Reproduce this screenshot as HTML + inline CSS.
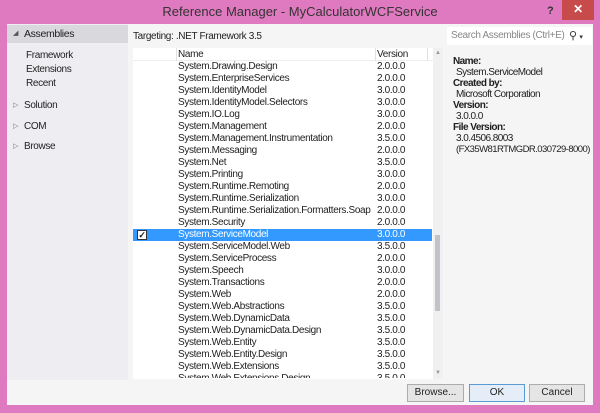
<!DOCTYPE html>
<html><head><meta charset="utf-8"><style>
*{margin:0;padding:0;box-sizing:border-box}
body{width:600px;height:413px;background:#e07ac0;font-family:"Liberation Sans",sans-serif;font-size:10px;letter-spacing:-0.35px;color:#1e1e1e;position:relative;overflow:hidden}
.abs{position:absolute}
.title{left:0;top:4px;width:600px;text-align:center;font-size:13px;letter-spacing:0;color:#333}
.client{left:7px;top:24px;width:586px;height:381px;background:#f5f5f5}
.left{left:7px;top:24px;width:121px;height:356px;background:#eeeef2}
.row{position:absolute;left:178px;height:12px;line-height:12px;width:260px;white-space:nowrap}
.ver{position:absolute;left:199px}
.btn{position:absolute;top:384px;height:18px;background:#e5e5e5;border:1px solid #acacac;text-align:center;line-height:16px;font-size:10px;letter-spacing:0}
.det{white-space:nowrap;letter-spacing:-0.55px}
.det b{font-weight:bold;display:block}
.det div{padding-left:3px}
</style></head><body>
<div class="abs title">Reference Manager - MyCalculatorWCFService</div>
<div class="abs" style="left:547px;top:5px;font-weight:bold;font-size:11px;color:#333">?</div>
<div class="abs" style="left:562px;top:0;width:32px;height:20px;background:#c74b4b;color:#fff;text-align:center;line-height:18px;font-size:12px;font-weight:bold">✕</div>
<div class="abs client"></div>
<div class="abs left"></div>
<div class="abs" style="left:7px;top:25px;width:121px;height:18px;background:#d8d8dd"></div>
<div class="abs" style="left:13px;top:29px;font-size:7px;color:#555">◢</div>
<div class="abs" style="left:24px;top:28px;font-size:10.5px">Assemblies</div>
<div class="abs" style="left:26px;top:50px">Framework</div>
<div class="abs" style="left:26px;top:64px">Extensions</div>
<div class="abs" style="left:26px;top:78px">Recent</div>
<div class="abs" style="left:13px;top:101px;font-size:7px;color:#777">▷</div>
<div class="abs" style="left:24px;top:100px">Solution</div>
<div class="abs" style="left:13px;top:122px;font-size:7px;color:#777">▷</div>
<div class="abs" style="left:24px;top:121px">COM</div>
<div class="abs" style="left:13px;top:142px;font-size:7px;color:#777">▷</div>
<div class="abs" style="left:24px;top:141px">Browse</div>
<div class="abs" style="left:133px;top:31px">Targeting: .NET Framework 3.5</div>
<div class="abs" style="left:447px;top:27px;width:145px;height:18px;background:#fff"></div>
<div class="abs" style="left:451px;top:30px;color:#888">Search Assemblies (Ctrl+E)</div>
<div class="abs" style="left:569px;top:29px;color:#333;font-size:11px">⚲ <span style="font-size:7px">▾</span></div>
<div class="abs" style="left:133px;top:48px;width:310px;height:331px;background:#fff"></div>
<div class="abs" style="left:133px;top:48px;width:300px;height:13px;border-bottom:1px solid #eee"></div>
<div class="abs" style="left:176px;top:48px;width:1px;height:13px;background:#e0e0e0"></div>
<div class="abs" style="left:375px;top:48px;width:1px;height:13px;background:#e0e0e0"></div>
<div class="abs" style="left:427px;top:48px;width:1px;height:13px;background:#e0e0e0"></div>
<div class="row" style="top:49px">Name<span class="ver">Version</span></div>
<div class="abs" style="left:433px;top:48px;width:10px;height:331px;background:#f0f0f0"></div>
<div class="abs" style="left:435px;top:50px;font-size:6px;color:#999">▲</div>
<div class="abs" style="left:435px;top:235px;width:5px;height:76px;background:#c2c3c9"></div>
<div class="abs" style="left:435px;top:370px;font-size:6px;color:#999">▼</div>
<div class="abs" style="left:133px;top:229px;width:299px;height:12px;background:#3399ff"></div>
<div class="abs" style="left:137px;top:230px;width:10px;height:10px;background:#fff;border:1px solid #333;font-size:9px;line-height:8px;text-align:center;font-weight:bold">✓</div>
<div class="row" style="top:61px">System.Drawing.Design<span class="ver">2.0.0.0</span></div>
<div class="row" style="top:73px">System.EnterpriseServices<span class="ver">2.0.0.0</span></div>
<div class="row" style="top:85px">System.IdentityModel<span class="ver">3.0.0.0</span></div>
<div class="row" style="top:97px">System.IdentityModel.Selectors<span class="ver">3.0.0.0</span></div>
<div class="row" style="top:109px">System.IO.Log<span class="ver">3.0.0.0</span></div>
<div class="row" style="top:121px">System.Management<span class="ver">2.0.0.0</span></div>
<div class="row" style="top:133px">System.Management.Instrumentation<span class="ver">3.5.0.0</span></div>
<div class="row" style="top:145px">System.Messaging<span class="ver">2.0.0.0</span></div>
<div class="row" style="top:157px">System.Net<span class="ver">3.5.0.0</span></div>
<div class="row" style="top:169px">System.Printing<span class="ver">3.0.0.0</span></div>
<div class="row" style="top:181px">System.Runtime.Remoting<span class="ver">2.0.0.0</span></div>
<div class="row" style="top:193px">System.Runtime.Serialization<span class="ver">3.0.0.0</span></div>
<div class="row" style="top:205px">System.Runtime.Serialization.Formatters.Soap<span class="ver">2.0.0.0</span></div>
<div class="row" style="top:217px">System.Security<span class="ver">2.0.0.0</span></div>
<div class="row" style="top:229px;color:#fff">System.ServiceModel<span class="ver">3.0.0.0</span></div>
<div class="row" style="top:241px">System.ServiceModel.Web<span class="ver">3.5.0.0</span></div>
<div class="row" style="top:253px">System.ServiceProcess<span class="ver">2.0.0.0</span></div>
<div class="row" style="top:265px">System.Speech<span class="ver">3.0.0.0</span></div>
<div class="row" style="top:277px">System.Transactions<span class="ver">2.0.0.0</span></div>
<div class="row" style="top:289px">System.Web<span class="ver">2.0.0.0</span></div>
<div class="row" style="top:301px">System.Web.Abstractions<span class="ver">3.5.0.0</span></div>
<div class="row" style="top:313px">System.Web.DynamicData<span class="ver">3.5.0.0</span></div>
<div class="row" style="top:325px">System.Web.DynamicData.Design<span class="ver">3.5.0.0</span></div>
<div class="row" style="top:337px">System.Web.Entity<span class="ver">3.5.0.0</span></div>
<div class="row" style="top:349px">System.Web.Entity.Design<span class="ver">3.5.0.0</span></div>
<div class="row" style="top:361px">System.Web.Extensions<span class="ver">3.5.0.0</span></div>
<div class="row" style="top:373px;height:5px;overflow:hidden;width:250px">System.Web.Extensions.Design<span class="ver">3.5.0.0</span></div>
<div class="abs det" style="left:453px;top:56px;line-height:11px">
<b>Name:</b><div>System.ServiceModel</div>
<b>Created by:</b><div>Microsoft Corporation</div>
<b>Version:</b><div>3.0.0.0</div>
<b>File Version:</b><div>3.0.4506.8003</div><div style="font-size:9.5px">(FX35W81RTMGDR.030729-8000)</div>
</div>
<div class="btn" style="left:407px;width:57px">Browse...</div>
<div class="btn" style="left:469px;width:56px;border-color:#5b9bd5;background:#e5eef8">OK</div>
<div class="btn" style="left:529px;width:56px">Cancel</div>
</body></html>
